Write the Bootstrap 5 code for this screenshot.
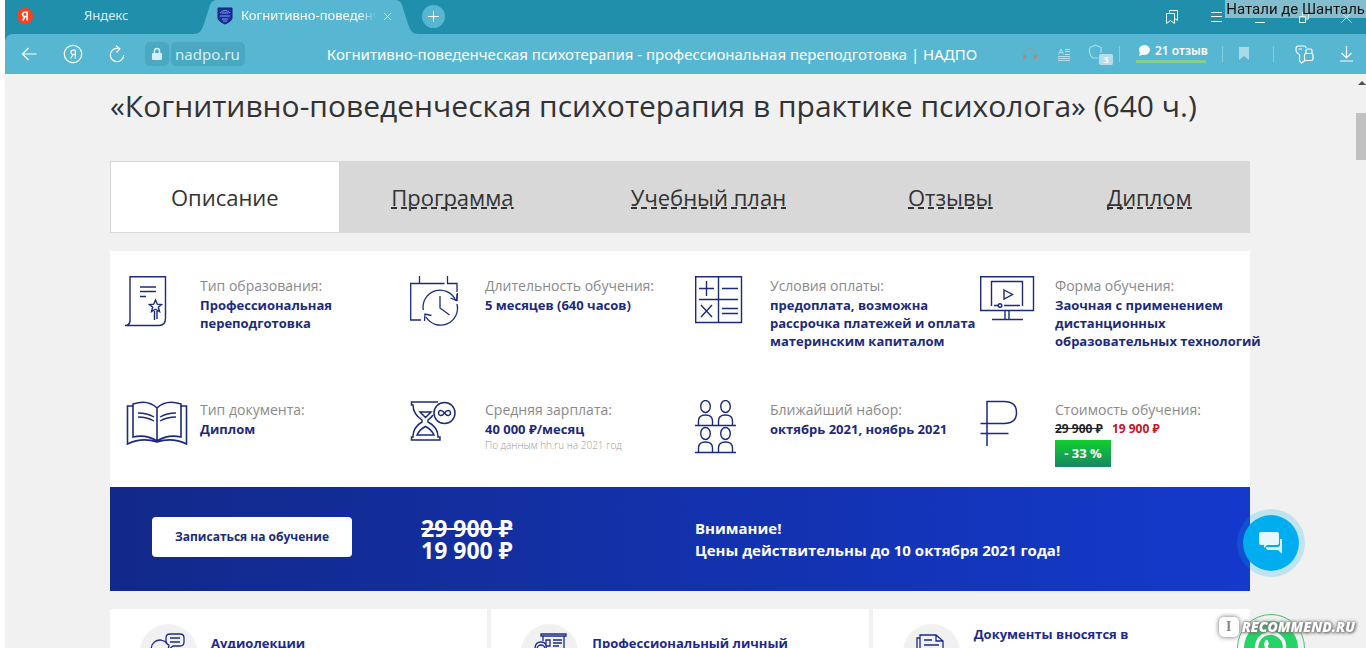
<!DOCTYPE html>
<html lang="ru">
<head>
<meta charset="utf-8">
<meta name="viewport" content="width=device-width, initial-scale=1">
<title>Когнитивно-поведенческая психотерапия - профессиональная переподготовка | НАДПО</title>
<link href="https://cdn.jsdelivr.net/npm/bootstrap@5.3.0/dist/css/bootstrap.min.css" rel="stylesheet">
<style>
  body { font-family: "Open Sans", "Noto Sans", sans-serif; background: #fff; overflow: hidden; }
  .app { margin-left: 5px; background: #f1f1f1; }
  svg { display: block; fill: none; stroke: currentColor; }
  svg.solid { stroke: none; }
  .chrome { font-family: "Noto Sans", sans-serif; background: #208fac; color: #fff; }
  .chrome button { background: none; border: 0; padding: 0; color: #fff; height: 34px; width: 44px; flex: none; display: flex; align-items: center; justify-content: center; }
  .strip { height: 34px; font-size: 13px; }
  .tab-idle { width: 188px; padding: 0 0 2px 12px; color: #d5ecf3; text-decoration: none; }
  .tab-idle span { margin-left: 51px; }
  .tab-live { width: 226px; padding: 0 14px 2px 24px; color: #fff; text-decoration: none; }
  .tab-live > .shape { position: absolute; inset: 0; width: 100%; height: 100%; fill: #57b7d3; stroke: none; }
  .tab-live > :not(.shape) { position: relative; }
  .fade-text { width: 138px; overflow: hidden; white-space: nowrap; -webkit-mask-image: linear-gradient(90deg, #000 85%, transparent 98%); mask-image: linear-gradient(90deg, #000 85%, transparent 98%); }
  .chrome .tab-close { width: 16px; height: 30px; }
  .chrome .plus { width: 23px; height: 23px; margin: 0 0 2px 3px; border-radius: 50%; background: #57b7d3; }
  .chrome .last-btn { width: 40px; }
  .toolbar { height: 40px; padding-left: 2px; background: #57b7d3; border-top-left-radius: 8px; }
  .lockbox, .domain { height: 24px; background: #4aa8c3; border-radius: 5px; color: #d6eef5; }
  .lockbox { width: 24px; margin: 0 2px 0 6px; }
  .domain { width: 74px; font-size: 15px; border: 0; padding: 0 0 0 4px; outline: 0; }
  .page-name { font-size: 15px; padding-left: 46px; white-space: nowrap; overflow: hidden; }
  .sep { width: 1px; height: 16px; background: #8accdf; }
  .chrome .ic { width: 34px; }
  .reviews { width: 70px; margin: 0 16px 4px; font-size: 12px; font-weight: 600; line-height: 17px; color: #fff; border-bottom: 3px solid #84cf8d; text-decoration: none; padding: 0 0 1px 2px; white-space: nowrap; }
  .shield-num { position: absolute; left: 11px; top: 10px; width: 14px; height: 11px; background: #b5deea; border-radius: 2px; font-size: 9px; line-height: 11px; font-weight: 700; }
  .scroller { width: 11px; background: #f1f1f1; }
  .scroller .thumb { width: 10px; height: 47px; background: #c1c1c1; margin: 27px 0 0 1px; }
  .wrap-main { max-width: 1140px; }
  .page-head { font-size: 30px; line-height: 38px; font-weight: 400; color: #333; margin: 13px 0 36px; white-space: nowrap; }
  .course-tabs { background: #d8d8d8; border: 1px solid #d8d8d8; height: 72px; font-size: 22px; }
  .course-tabs .nav-link { padding: 0; color: #333; height: 70px; display: flex; align-items: center; justify-content: center; border-radius: 0; flex: 0 0 20%; }
  .course-tabs .active { background: #fff; }
  .course-tabs .wide { flex-basis: 25%; }
  .course-tabs .slim { flex-basis: 17.5%; }
  .course-tabs u { text-decoration: none; line-height: 24px; background: repeating-linear-gradient(90deg, #333 0 6px, transparent 6px 10px) bottom / 100% 2px no-repeat; }
  .panel { background: #fff; margin-top: 18px; height: 236px; padding-top: 25px; }
  .feature { height: 124px; padding-left: 15px; color: #1c2a7c; font-size: 13px; line-height: 18px; white-space: nowrap; }
  .feature .pic { width: 75px; flex: none; }
  .feature dt { font-size: 14px; line-height: 20px; font-weight: 400; color: #8a8a8a; }
  .feature dd { margin: 0; font-weight: 700; }
  .feature .note { font-size: 10px; line-height: 15px; color: #999; font-weight: 300; }
  .feature .prices { font-size: 12px; }
  .sale { color: #c8141e; margin-left: 6px; }
  .feature .off { width: 56px; height: 27px; line-height: 27px; margin-top: 2px; background: linear-gradient(#10d02c, #168763); color: #fff; text-align: center; }
  .promo { height: 104px; background: linear-gradient(90deg, #12298a, #1439cc); color: #fff; font-weight: 700; font-size: 15px; line-height: 22px; }
  .promo .cell-btn { width: 311px; padding: 0 0 4px 42px; }
  .promo .cell-price { width: 274px; font-size: 23px; }
  .signup { width: 200px; height: 40px; border: 0; border-radius: 4px; background: #fff; color: #1c2a7c; font-size: 12px; font-weight: 700; }
  .tiles { margin-top: 18px; gap: 4px; }
  .tile { flex: 1 1 0; background: #fff; padding: 15px 30px; height: 110px; color: #1c2a8c; font-size: 13px; line-height: 20px; font-weight: 700; }
  .tile .disc { width: 57px; height: 57px; border-radius: 50%; background: #f1f1f1; margin-right: 14px; flex: none; }
  .tile p { margin: 0; padding-top: 9px; }
  .tile .two { padding-top: 0; }
  .owner { position: fixed; right: 0; top: 0; height: 18px; line-height: 19px; padding: 0 1px; background: rgba(200, 222, 228, .6); font-family: Roboto, sans-serif; font-size: 15px; color: #111; }
  .chat, .whats { position: fixed; right: 61px; width: 68px; height: 68px; border-radius: 50%; padding: 0; }
  .chat { top: 509px; background: #00aeef; background-clip: padding-box; border: 6px solid rgba(0, 174, 239, .2); color: #fff; }
  .whats { top: 614px; background: #25d366; background-clip: content-box; padding: 6px; border: 1px solid #3ac56c; color: #fff; }
  .stamp { position: fixed; right: 11px; top: 615px; height: 24px; font-size: 14px; line-height: 24px; font-weight: 800; font-style: italic; color: #fff; text-shadow: 0 0 3px #777, 0 0 4px #777, 1px 1px 3px #777; }
  .stamp b { width: 20px; height: 20px; background: #fff; border-radius: 5px; color: #888; font: 700 14px/20px "Liberation Serif", serif; box-shadow: 0 0 5px #666; text-shadow: none; text-align: center; margin-right: 3px; }
</style>
</head>
<body>
<div class="app vh-100 d-flex flex-column overflow-hidden">
  <header class="chrome flex-shrink-0">
    <div class="strip d-flex align-items-center">
      <a href="#" class="tab-idle d-flex align-items-center h-100">
        <svg class="solid" width="16" height="16"><circle cx="8" cy="8" r="8" fill="#fc3f1d"/><path d="M10.2 3.5V12.500M10.200 4.200H8.200C6.300 4.200 5.600 5.300 5.600 6.400 5.600 7.800 6.500 8.400 8 8.600H10M8 8.600 5.700 12.500" stroke="#fff" stroke-width="1.600" fill="none"/></svg>
        <span>Яндекс</span>
      </a>
      <a href="#" class="tab-live position-relative d-flex align-items-center h-100">
        <svg class="shape" viewBox="0 0 226 34" preserveAspectRatio="none"><path d="M0 34C8 34 9 29 11 24L17 5Q19 0 24 0H202Q207 0 209 5L215 24C217 29 218 34 226 34Z"/></svg>
        <svg class="solid" width="16" height="18"><path d="M1 1H15V11Q15 14 8 17 1 14 1 11Z" fill="#1b2fa0" stroke="#122070"/><path d="M3 6Q8 1 13 6M5 6H11M3 9H13M5 12H11M6 14H10" stroke="#7d9be6" fill="none"/></svg>
        <span class="fade-text ms-2">Когнитивно-поведенческая</span>
        <button class="tab-close" aria-label="Закрыть вкладку"><svg width="9" height="9"><path d="M1 1 8 8M8 1 1 8"/></svg></button>
      </a>
      <button class="plus" aria-label="Новая вкладка"><svg width="11" height="11"><path d="M5.500 0V11M0 5.500H11"/></svg></button>
      <button class="ms-auto" aria-label="Закладки"><svg width="14" height="16"><path d="M4.500 3.500V1.500H12.500V11.500L10 9.500M1.500 4.500H9.500V14.500L5.500 11.500 1.500 14.500Z"/></svg></button>
      <button aria-label="Меню"><svg width="11" height="10"><path d="M0 .5H11M0 4.500H11M0 9.500H11"/></svg></button>
      <button aria-label="Свернуть"><svg width="10" height="12"><path d="M0 11.500H10"/></svg></button>
      <button aria-label="Развернуть"><svg width="10" height="12"><path d="M3.500 5V1.500H9.500V8H7M.5 5.500H6.500V11.500H.5Z"/></svg></button>
      <button class="last-btn" aria-label="Закрыть"><svg width="11" height="11"><path d="M.5.5 10.500 10.500M10.500.5.5 10.500"/></svg></button>
    </div>
    <div class="toolbar d-flex align-items-center">
      <button aria-label="Назад"><svg width="16" height="14" stroke-width="1.200"><path d="M15.500 7H1.500M7.500 1 1.500 7 7.500 13"/></svg></button>
      <button aria-label="Яндекс"><svg width="20" height="20" stroke-width="1.200"><circle cx="10" cy="10" r="8.700"/><path d="M12.300 5.500V14.500M12.300 6.100H10.200C8.600 6.100 7.900 7.200 7.900 8.200 7.900 9.600 8.700 10.300 10 10.500H12M10 10.500 7.700 14.500"/></svg></button>
      <button aria-label="Обновить"><svg width="16" height="18" stroke-width="1.200"><path d="M14.700 10A6.700 6.700 0 1 1 9.500 3.500M7 .8 10.800 3.800 7.500 7.500"/></svg></button>
      <span class="lockbox d-flex align-items-center justify-content-center"><svg width="12" height="14"><path d="M3.500 6V3.800Q3.500 1.500 6 1.500 8.500 1.500 8.500 3.800V6" stroke-width="1.500"/><rect x="1" y="6" width="10" height="7" rx="1" fill="currentColor" stroke="none"/></svg></span>
      <input class="domain" type="text" value="nadpo.ru" aria-label="Адрес">
      <div class="page-name flex-grow-1 text-center">Когнитивно-поведенческая психотерапия - профессиональная переподготовка | НАДПО</div>
      <button class="ic" aria-label="Слушать"><svg width="16" height="14"><path d="M2 9V7.500Q2 1.500 8 1.500 14 1.500 14 7.500V9" stroke="#8b9fa6"/><path d="M2.500 8V12M13.500 8V12" stroke="#a28f8c" stroke-width="3"/></svg></button>
      <button class="ic" aria-label="Режим чтения"><svg width="12" height="13"><path d="M.5 6.500 3 1 5.500 6.500M1.500 4.500H4.500M7 1.500H12M7 3.500H12M7 6.500H12M0 8.500H12M0 10.500H12M0 12.500H12" stroke="#b5deea"/></svg></button>
      <button class="ic" aria-label="Защита"><span class="position-relative d-block"><svg width="20" height="20" stroke-width="1.200"><path d="M7.500 1 2 3.500Q0 10 5 14H10M7.500 1 13 3.500V9" stroke="#a9dae7"/></svg><span class="shield-num">3</span></span></button>
      <span class="sep ms-1"></span>
      <a href="#" class="reviews d-flex align-items-center"><svg width="13" height="13" class="solid me-1 flex-shrink-0"><path d="M6.500 1A5.500 5 0 1 1 4.500 10.700L1 12 2 9A5.500 5 0 0 1 6.500 1Z" fill="#fff"/></svg>21 отзыв</a>
      <span class="sep"></span>
      <button class="ic mx-1" aria-label="В закладки"><svg class="solid" width="10" height="14"><path d="M0 0H10V13L5 9 0 13Z" fill="#a9dae7"/></svg></button>
      <span class="sep ms-2"></span>
      <button class="ms-2" aria-label="Пароли"><svg width="19" height="19" stroke-width="1.200"><path d="M9.500 15V16L6.500 18 4.500 16V9.500Q1 8 1 4.500 1 1 3 1H9Q11 1 11 3M3.500 4H7"/><rect x="9.500" y="8.500" width="8.500" height="7" rx="1.500"/><path d="M11 8V5.500Q11 4 12.500 4H15.500Q17 4 17 5.500V8"/></svg></button>
      <button class="last-btn" aria-label="Загрузки"><svg width="13" height="16" stroke-width="1.200"><path d="M6.500 0V12M1.500 7 6.500 12 11.500 7M0 15H13"/></svg></button>
    </div>
  </header>

  <div class="d-flex flex-grow-1 overflow-hidden">
    <main class="flex-grow-1 overflow-hidden">
      <div class="wrap-main mx-auto">
        <h1 class="page-head">«Когнитивно-поведенческая психотерапия в практике психолога» (640 ч.)</h1>

        <nav class="nav course-tabs">
          <a class="nav-link active" href="#">Описание</a>
          <a class="nav-link" href="#"><u>Программа</u></a>
          <a class="nav-link wide" href="#"><u>Учебный план</u></a>
          <a class="nav-link slim" href="#"><u>Отзывы</u></a>
          <a class="nav-link slim" href="#"><u>Диплом</u></a>
        </nav>

        <section class="panel">
          <div class="row g-0">
            <div class="col-3 feature d-flex">
              <div class="pic"><svg width="44" height="52" stroke-width="1.400"><path d="M5 46V.7H40.500V42Q40.500 49.500 34 49.500H0Q5 49.500 5 44M15 11H31M15 15.500H31M15 20.500H21"/><path d="M30.500 24 32.300 28.200 36.500 28.500 33.300 31.300 34.500 35.500 30.500 33.200 26.500 35.500 27.700 31.300 24.500 28.500 28.700 28.200ZM29.500 35V44M32 35V43" stroke-width="1.400"/></svg></div>
              <dl class="mb-0"><dt>Тип образования:</dt><dd>Профессиональная<br>переподготовка</dd></dl>
            </div>
            <div class="col-3 feature d-flex">
              <div class="pic"><svg width="52" height="52" stroke-width="1.300"><path d="M11 44H.7V7.500H9.500V0M9.500 7.500H34.500M37.500 0V7.500H47V16M47 18V25"/><path d="M13.300 34A17 17 0 0 1 45.500 24M47 28A17 17 0 0 1 16 41M40.500 22 46.500 24.500 47.500 17M21.500 39.500 15 38 14.500 45M30 20V32L39.500 39"/></svg></div>
              <dl class="mb-0"><dt>Длительность обучения:</dt><dd>5 месяцев (640 часов)</dd></dl>
            </div>
            <div class="col-3 feature d-flex">
              <div class="pic"><svg width="48" height="48" stroke-width="1.400"><path d="M.7.700H46.500V46.500H.7ZM23.500 1V46M4 23.500H43M4 12.500H19M11.500 5V20M27 12.500H43M6 29 17 41M17 29 6 41M27 32.500H43M27 37.500H43"/></svg></div>
              <dl class="mb-0"><dt>Условия оплаты:</dt><dd>предоплата, возможна<br>рассрочка платежей и оплата<br>материнским капиталом</dd></dl>
            </div>
            <div class="col-3 feature d-flex">
              <div class="pic"><svg width="56" height="48" stroke-width="1.400"><path d="M.7.700H53.500V34.500H.7ZM11.500 30V5.500H42.500V30M24 14 32.500 18.500 24 23ZM14 29.500H18M24 29.500H40M25 35V43M29 35V43M12 43.500H43"/><circle cx="20" cy="29.500" r="1.800"/></svg></div>
              <dl class="mb-0"><dt>Форма обучения:</dt><dd>Заочная с применением<br>дистанционных<br>образовательных технологий</dd></dl>
            </div>
            <div class="col-3 feature d-flex">
              <div class="pic"><svg width="64" height="48" stroke-width="1.600"><path d="M8 6H2.500V44Q17 37 32 42 47 37 61.500 44V6H56M8 4Q23-1 32 8 41-1 56 4V37Q43 34 32 41 21 34 8 37ZM32 8V41"/><path d="M13 13Q22 13 29 17M13 17Q22 17 29 21M51 13Q42 13 35 17M51 17Q42 17 35 21" stroke-width="1.300"/></svg></div>
              <dl class="mb-0"><dt>Тип документа:</dt><dd>Диплом</dd></dl>
            </div>
            <div class="col-3 feature d-flex">
              <div class="pic"><svg width="48" height="42" stroke-width="1.500"><path d="M28 2H1.500V5H3Q3 14 12 20V22Q3 27 3 37H1.500V40H30V37H28Q28 27 18 22V20Q21 18 23 15M10 12H21L15.500 17.500Z"/><path d="M7 35Q10 29 15.500 26.500 21 29 24 35Z"/><circle cx="34.500" cy="13" r="10.500"/><path d="M34.500 13C31.500 9 28.500 10.500 28.500 13S31.500 17 34.500 13 40.500 10.500 40.500 13 37.500 17 34.500 13Z"/></svg></div>
              <dl class="mb-0"><dt>Средняя зарплата:</dt><dd>40 000 ₽/месяц</dd><dd class="note">По данным hh.ru на 2021 год</dd></dl>
            </div>
            <div class="col-3 feature d-flex">
              <div class="pic"><svg width="42" height="54" stroke-width="1.400"><g id="pair"><ellipse cx="10.500" cy="6.500" rx="4.800" ry="6"/><ellipse cx="30.500" cy="6.500" rx="4.800" ry="6"/><path d="M3.500 25V21Q3.500 15 10.500 15T17.500 21V25M23.500 25V21Q23.500 15 30.500 15T37.500 21V25M0 25.500H41"/></g><use href="#pair" y="27"/></svg></div>
              <dl class="mb-0"><dt>Ближайший набор:</dt><dd>октябрь 2021, ноябрь 2021</dd></dl>
            </div>
            <div class="col-3 feature d-flex">
              <div class="pic"><svg width="40" height="48" stroke-width="1.500"><path d="M7 46V1.500H24Q36.500 1.500 36.500 12.500T24 23.500H.5M.5 33.500H28.500"/></svg></div>
              <dl class="mb-0"><dt>Стоимость обучения:</dt><dd class="prices"><s class="text-dark">29 900 ₽</s> <span class="sale">19 900 ₽</span></dd><dd class="off">- 33 %</dd></dl>
            </div>
          </div>
        </section>

        <section class="promo d-flex align-items-center">
          <div class="cell-btn flex-shrink-0"><button class="signup" type="button">Записаться на обучение</button></div>
          <div class="cell-price flex-shrink-0"><s>29 900 ₽</s><br>19 900 ₽</div>
          <div>Внимание!<br>Цены действительны до 10 октября 2021 года!</div>
        </section>

        <section class="tiles d-flex">
          <article class="tile d-flex">
            <div class="disc d-flex justify-content-center pt-2"><svg width="40" height="40" stroke-width="1.300"><path d="M4 22A8 8 0 0 1 18 11.500M3 17H8V24H3ZM13 17H17V24H13ZM21 2H31Q35 2 35 6V10Q35 14 31 14H24L19 18 20 13Q17 12 17 9V6Q17 2 21 2ZM21 6H31M21 10H31"/></svg></div>
            <p>Аудиолекции</p>
          </article>
          <article class="tile d-flex">
            <div class="disc d-flex justify-content-center pt-2"><svg width="40" height="40" stroke-width="1.300"><path d="M11 2H36V4H11ZM13 4V9M34 4V24M16 8H20V14H16ZM23 8H32M23 11H32M23 14H29M5 17Q5 10 11 10T16 17"/><circle cx="11" cy="17" r="4"/></svg></div>
            <p>Профессиональный личный<br>кабинет</p>
          </article>
          <article class="tile d-flex">
            <div class="disc d-flex justify-content-center pt-2"><svg width="40" height="40" stroke-width="1.300"><path d="M9 34V3H25L32 9V34ZM25 3V9H32M9 6H6V34M13 8H21M13 13H28M13 17H28"/></svg></div>
            <p class="two">Документы вносятся в<br>государственный реестр</p>
          </article>
        </section>
      </div>
    </main>
    <div class="scroller flex-shrink-0">
      <svg class="solid" width="11" height="12"><path d="M3 11 7 7 11 11Z" fill="#505050"/></svg>
      <div class="thumb"></div>
    </div>
  </div>
</div>

<div class="owner">Натали де Шанталь</div>
<button class="chat d-flex align-items-center justify-content-center" aria-label="Чат"><svg class="solid" width="26" height="26"><path d="M3 2H19Q21 2 21 4V13Q21 15 19 15H9L6 18V15H3Q1 15 1 13V4Q1 2 3 2Z" fill="#fff" opacity=".9"/><path d="M22 9H24V24L20 20H10Q8 20 8 17H20Q22 17 22 15Z" fill="#fff" opacity=".85"/></svg></button>
<button class="whats d-flex justify-content-center" aria-label="WhatsApp"><svg width="36" height="40" class="mt-2"><path d="M4 34 6 26A14 14 0 1 1 12 31Z" stroke-width="3.500"/><path d="M12 12Q14 10 15 12L16 15 14.500 17Q17 22 21 23L23 21 26 23Q26 27 22 27 12 25 11 15Z" fill="#fff" stroke="none"/></svg></button>
<div class="stamp d-flex align-items-center"><b>I</b>RECOMMEND.RU</div>
<script src="https://cdn.jsdelivr.net/npm/bootstrap@5.3.0/dist/js/bootstrap.bundle.min.js"></script>
</body>
</html>
